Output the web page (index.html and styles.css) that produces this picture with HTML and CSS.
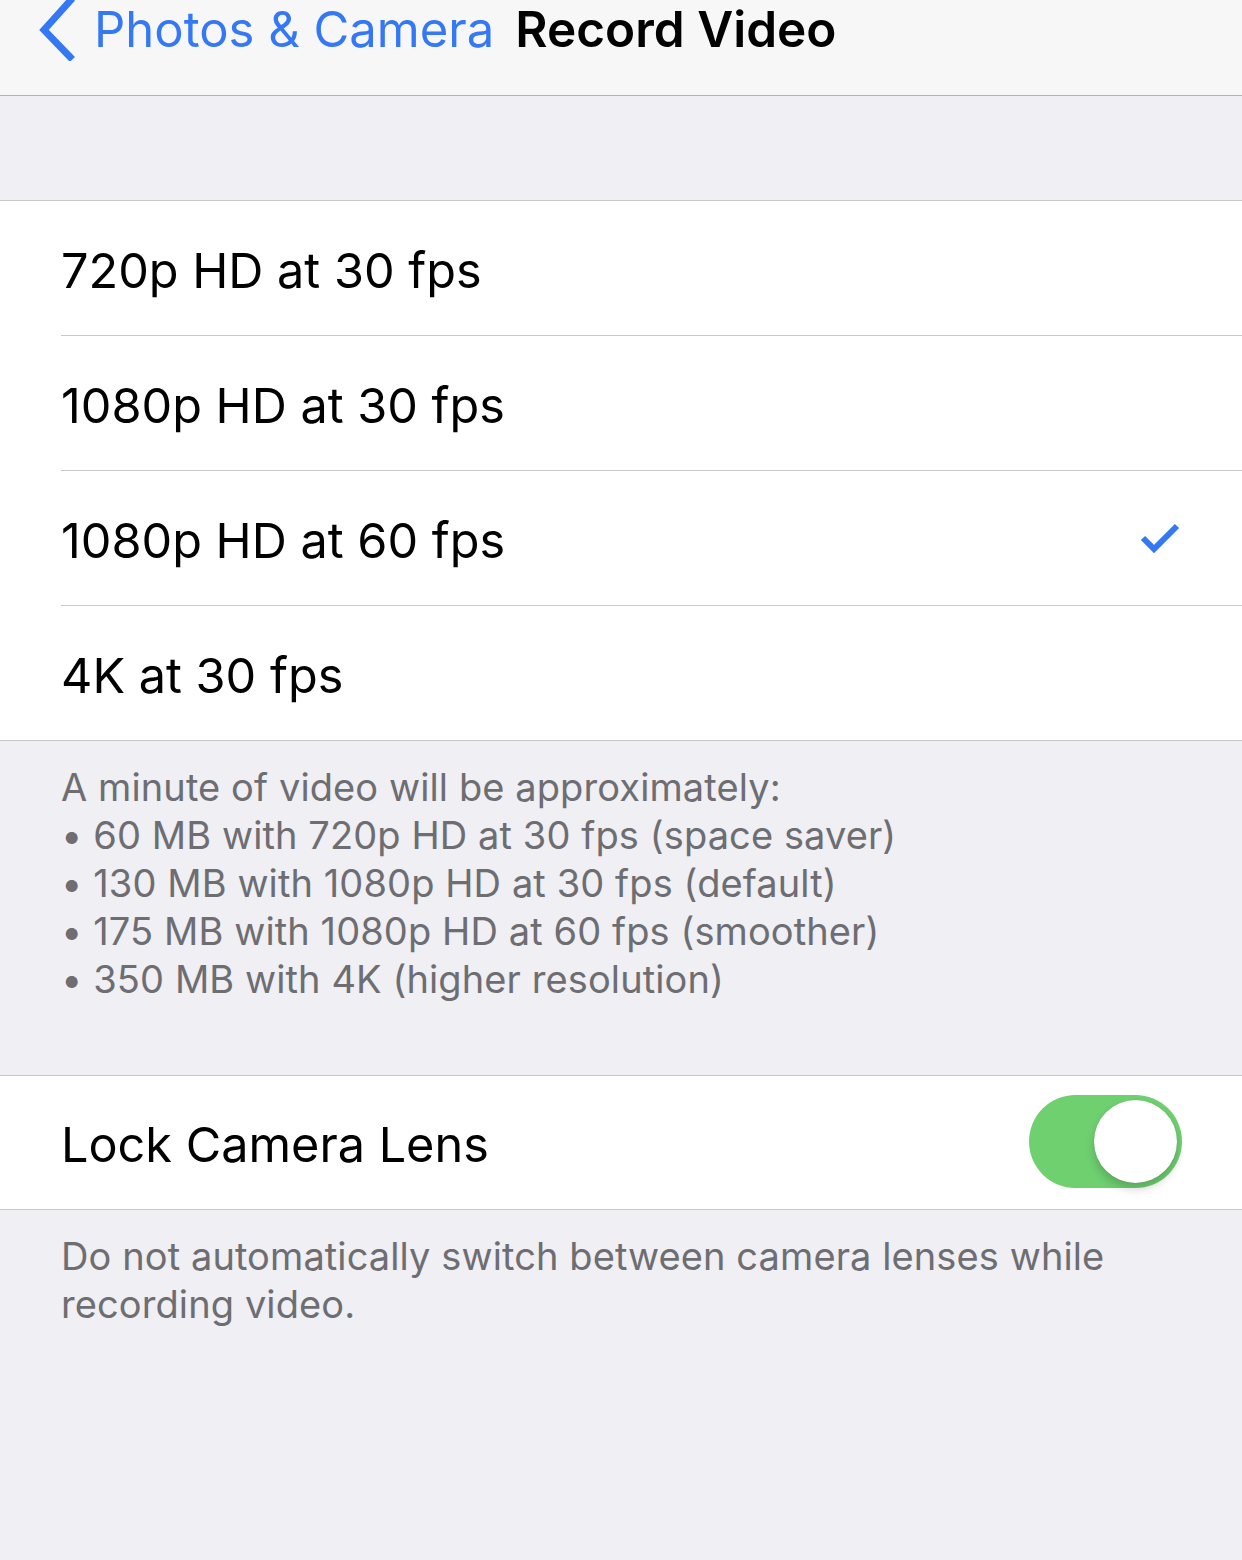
FILE: index.html
```html
<!DOCTYPE html>
<html lang="en">
<head>
    <meta charset="UTF-8">
    <title>Record Video</title>
    <link rel="stylesheet" href="styles.css">
</head>
<body>
    <div class="navbar">
        <div class="back">
            <svg class="chevron" width="40" height="62" viewBox="0 0 40 62">
                <path d="M34 2 L8 31 L34 58" fill="none" stroke="#3478f6" stroke-width="7" stroke-linecap="square"/>
            </svg>
            <span>Photos &amp; Camera</span>
        </div>
        <div class="title">Record Video</div>
    </div>

    <div class="spacer"></div>

    <div class="group">
        <div class="row"><span>720p HD at 30 fps</span></div>
        <div class="row"><span>1080p HD at 30 fps</span></div>
        <div class="row">
            <span>1080p HD at 60 fps</span>
            <svg class="check" width="40" height="32" viewBox="0 0 40 32">
                <path d="M3 15 L14 26 L37 3" fill="none" stroke="#3478f6" stroke-width="6"/>
            </svg>
        </div>
        <div class="row"><span>4K at 30 fps</span></div>
    </div>

    <div class="footer">
        A minute of video will be approximately:<br>
        • 60 MB with 720p HD at 30 fps (space saver)<br>
        • 130 MB with 1080p HD at 30 fps (default)<br>
        • 175 MB with 1080p HD at 60 fps (smoother)<br>
        • 350 MB with 4K (higher resolution)
    </div>

    <div class="group second">
        <div class="row">
            <span>Lock Camera Lens</span>
            <div class="switch"><div class="knob"></div></div>
        </div>
    </div>

    <div class="footer">
        Do not automatically switch between camera lenses while<br>
        recording video.
    </div>
</body>
</html>
```

FILE: styles.css
```css
/* Global */
body {
    margin: 0;
    background: #efeff4;
    font-family: 'Inter', 'Roboto', sans-serif;
    height: 1560px;
    overflow: hidden;
}
/* Nav bar */
.navbar {
    height: 95px;
    background: #f7f7f8;
    border-bottom: 1px solid #b4b4b8;
    display: flex;
    align-items: flex-start;
    padding-left: 36px;
}
.back {
    display: flex;
    align-items: center;
    color: #3478f6;
    font-size: 49px;
    height: 58px;
}
.chevron {
    margin-right: 18px;
    margin-top: 2px;
}
.title {
    font-size: 49.5px;
    font-weight: 600;
    color: #000;
    height: 58px;
    line-height: 58px;
    margin-left: 21px;
}
.spacer {
    height: 104px;
}
/* Table groups */
.group {
    background: #fff;
    border-top: 1px solid #c8c7cc;
    border-bottom: 1px solid #c8c7cc;
}
.row {
    height: 134px;
    margin-left: 61px;
    padding-right: 62px;
    display: flex;
    align-items: center;
    justify-content: space-between;
    font-size: 48.6px;
    color: #000;
    border-bottom: 1px solid #c8c7cc;
}
.row span {
    padding-top: 4px;
}
.row:last-child {
    border-bottom: none;
}
.check {
    margin-top: 2px;
}
.footer {
    color: #6d6d72;
    font-size: 38px;
    letter-spacing: 0.1px;
    line-height: 48px;
    padding: 22px 61px 0;
}
.second {
    margin-top: 72px;
}
.second .row {
    height: 133px;
    padding-right: 60px;
}
/* Switch */
.switch {
    width: 153px;
    height: 93px;
    border-radius: 47px;
    background: #6fd070;
    position: relative;
    margin-top: -2px;
}
.knob {
    position: absolute;
    right: 5px;
    top: 5px;
    width: 83px;
    height: 83px;
    border-radius: 50%;
    background: #fff;
    box-shadow: 0 6px 10px rgba(0, 0, 0, 0.18), 0 0 1px rgba(0, 0, 0, 0.2);
}
```
